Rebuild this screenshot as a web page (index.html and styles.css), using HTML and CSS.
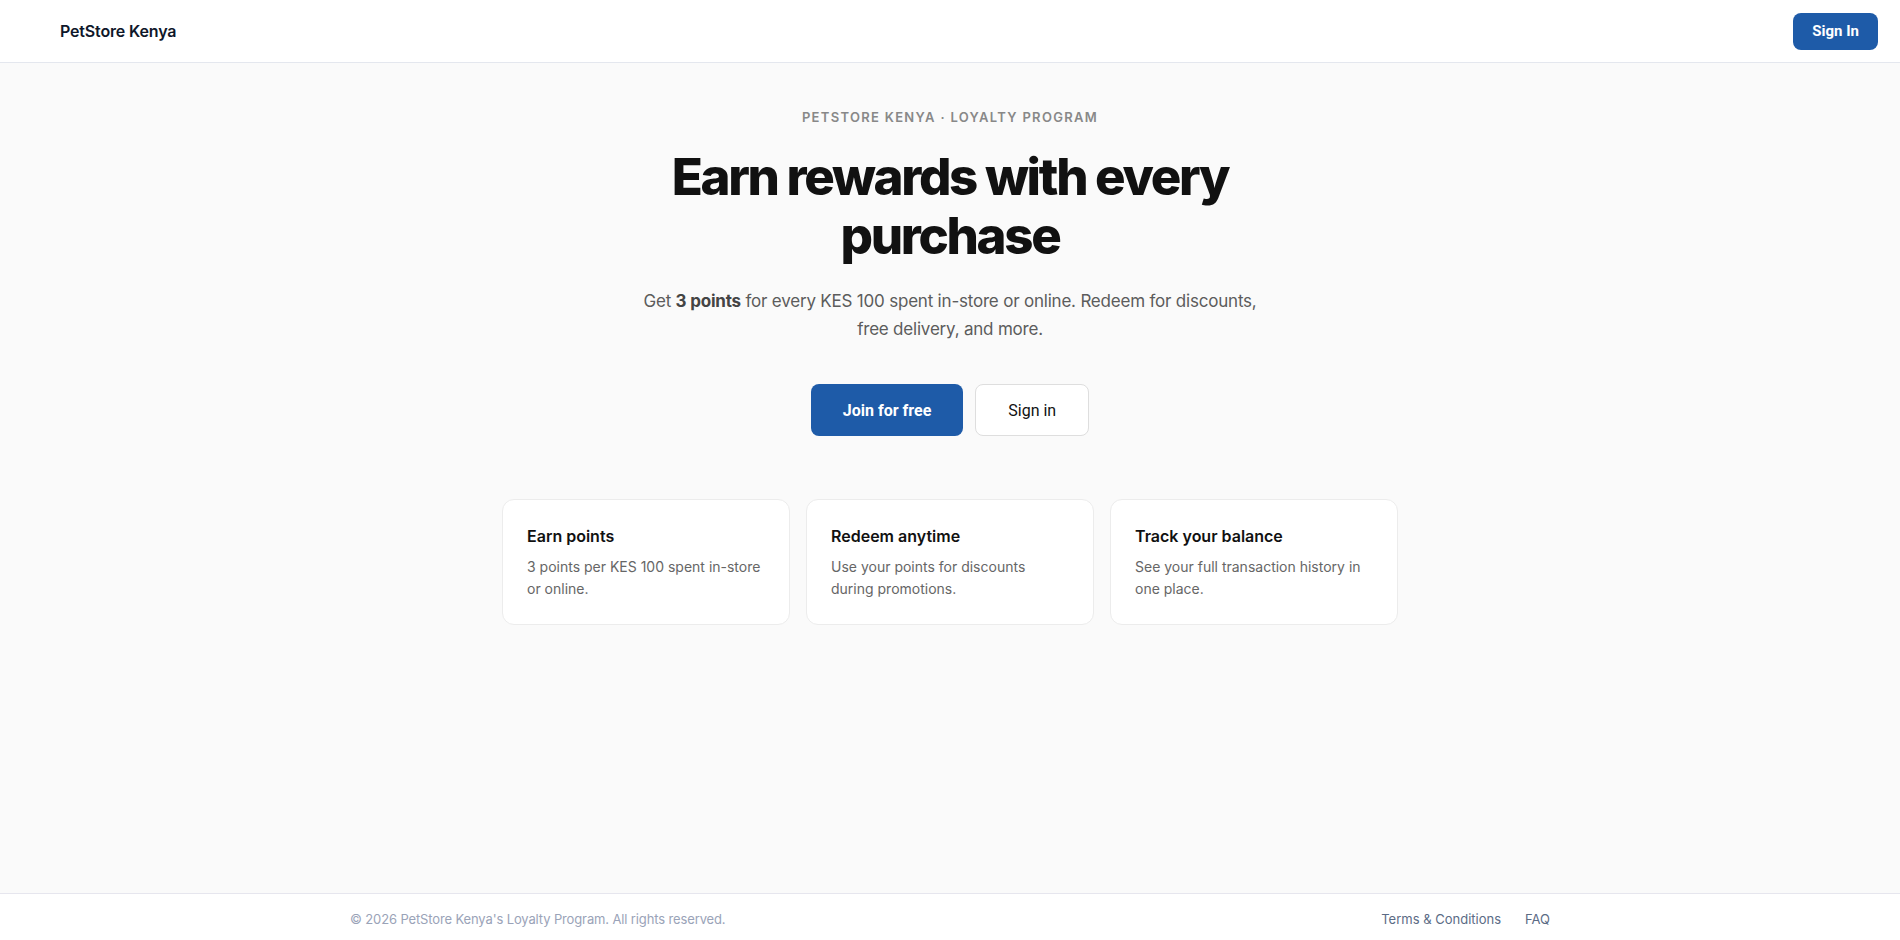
FILE: index.html
```html
<!DOCTYPE html>
<html lang="en">
<head>
<meta charset="utf-8">
<title>PetStore Kenya · Loyalty Program</title>
<link rel="stylesheet" href="styles.css">
</head>
<body>
  <header class="topbar">
    <a class="brand" href="#">PetStore Kenya</a>
    <a class="btn btn-primary btn-small" href="#">Sign In</a>
  </header>

  <main class="main">
    <section class="hero">
      <p class="eyebrow">PetStore Kenya · Loyalty Program</p>
      <h1 class="hero-title">Earn rewards with every purchase</h1>
      <p class="hero-text">Get <strong>3 points</strong> for every KES 100 spent in-store or online. Redeem for discounts, free delivery, and more.</p>
      <div class="hero-actions">
        <a class="btn btn-primary btn-large" href="#">Join for free</a>
        <a class="btn btn-outline btn-large" href="#">Sign in</a>
      </div>
    </section>

    <section class="features">
      <article class="feature">
        <h2 class="feature-title">Earn points</h2>
        <p class="feature-text">3 points per KES 100 spent in-store or online.</p>
      </article>
      <article class="feature">
        <h2 class="feature-title">Redeem anytime</h2>
        <p class="feature-text">Use your points for discounts during promotions.</p>
      </article>
      <article class="feature">
        <h2 class="feature-title">Track your balance</h2>
        <p class="feature-text">See your full transaction history in one place.</p>
      </article>
    </section>
  </main>

  <footer class="footer">
    <div class="footer-inner">
      <p class="copyright">© 2026 PetStore Kenya's Loyalty Program. All rights reserved.</p>
      <nav class="footer-links">
        <a href="#">Terms &amp; Conditions</a>
        <a href="#">FAQ</a>
      </nav>
    </div>
  </footer>
</body>
</html>
```

FILE: styles.css
```css
* {
  box-sizing: border-box;
}

html, body {
  margin: 0;
  padding: 0;
}

body {
  min-height: 100vh;
  display: flex;
  flex-direction: column;
  background: #fafafa;
  color: #111;
  font-family: Inter, "Noto Sans", sans-serif;
}

a {
  text-decoration: none;
  color: inherit;
}

/* Top bar */
.topbar {
  height: 63px;
  display: flex;
  align-items: center;
  justify-content: space-between;
  padding: 0 22px 0 60px;
  background: #fff;
  border-bottom: 1px solid #e4e7ee;
}

.brand {
  font-size: 16px;
  font-weight: 600;
  color: #0f172a;
  letter-spacing: -0.01em;
}

/* Buttons */
.btn {
  display: inline-flex;
  align-items: center;
  justify-content: center;
  font-family: Roboto, "Liberation Sans", sans-serif;
  border-radius: 8px;
}

.btn-primary {
  background: #1e5ba8;
  color: #fff;
  font-weight: 700;
}

.btn-outline {
  background: #fff;
  color: #111;
  border: 1px solid #dedede;
  font-weight: 400;
}

.btn-small {
  height: 37px;
  padding: 0 19px;
  font-size: 15px;
}

.btn-large {
  height: 52px;
  padding: 0 32px;
  font-size: 16px;
}

/* Hero */
.main {
  flex: 1;
  padding-top: 44px;
}

.hero {
  max-width: 640px;
  margin: 0 auto;
  text-align: center;
}

.eyebrow {
  margin: 0;
  font-size: 13px;
  line-height: 20px;
  font-weight: 600;
  letter-spacing: 0.1em;
  text-transform: uppercase;
  color: #888;
}

.hero-title {
  margin: 20px 0 0;
  font-size: 51px;
  line-height: 59px;
  font-weight: 800;
  letter-spacing: -0.045em;
  color: #111;
}

.hero-text {
  margin: 22px 0 0;
  font-size: 17px;
  line-height: 28px;
  letter-spacing: -0.012em;
  color: #5c5c5c;
}

.hero-text strong {
  font-weight: 700;
  color: #444;
}

.hero-actions {
  margin-top: 41px;
  display: flex;
  justify-content: center;
  gap: 12px;
}

/* Feature cards */
.features {
  max-width: 896px;
  margin: 63px auto 0;
  display: grid;
  grid-template-columns: repeat(3, 1fr);
  gap: 16px;
}

.feature {
  background: #fff;
  border: 1px solid #ececec;
  border-radius: 12px;
  padding: 24px 24px 23px;
}

.feature-title {
  margin: 0;
  font-size: 16px;
  line-height: 24px;
  font-weight: 600;
  color: #111;
}

.feature-text {
  margin: 8px 0 0;
  font-size: 14px;
  line-height: 22.4px;
  color: #666;
}

/* Footer */
.footer {
  background: #fff;
  border-top: 1px solid #e6e6ee;
  padding: 15px 0 11px;
}

.footer-inner {
  max-width: 1200px;
  margin: 0 auto;
  display: flex;
  justify-content: space-between;
  align-items: center;
}

.copyright {
  margin: 0;
  font-size: 13px;
  line-height: 20px;
  letter-spacing: -0.01em;
  color: #9aa3b8;
}

.footer-links {
  display: flex;
  gap: 24px;
  font-size: 13px;
  line-height: 20px;
}

.footer-links a {
  color: #5b6b85;
}
```
